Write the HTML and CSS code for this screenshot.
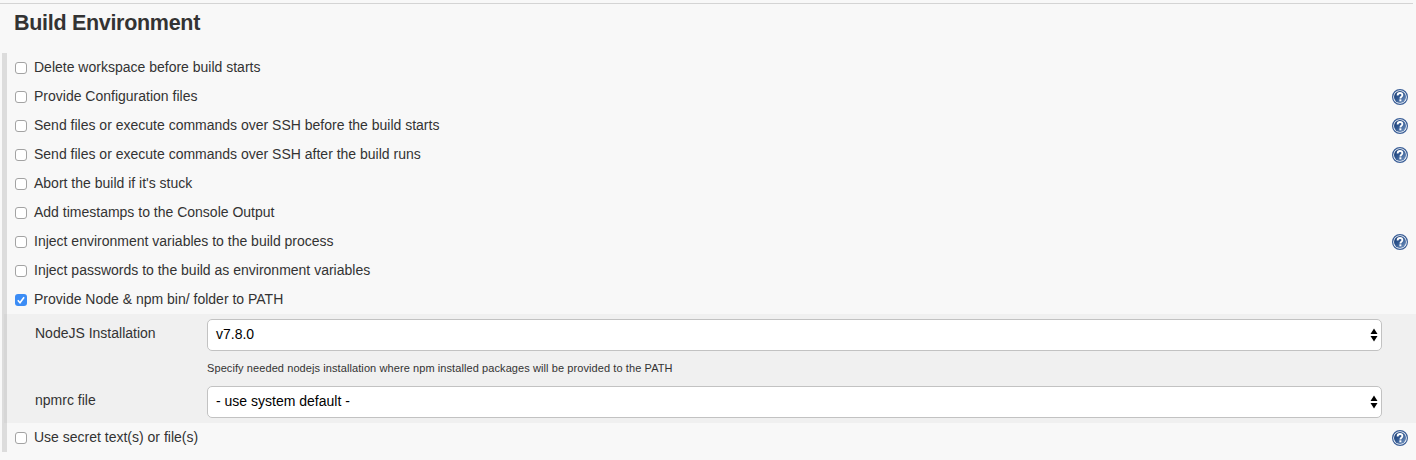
FILE: index.html
```html
<!DOCTYPE html>
<html lang="en">
<head>
<meta charset="utf-8">
<title>Build Environment</title>
<link rel="stylesheet" href="styles.css">
</head>
<body>
<svg class="defs" width="0" height="0" aria-hidden="true">
  <defs>
    <linearGradient id="blue" x1="0" y1="0" x2="1" y2="1">
      <stop offset="0" stop-color="#153870"/><stop offset=".45" stop-color="#305790"/><stop offset="1" stop-color="#7d9cc6"/>
    </linearGradient>
    <symbol id="help" viewBox="0 0 16 16">
      <circle cx="8" cy="8" r="7.4" fill="#fff" stroke="#3a5e97" stroke-width="1.2"/>
      <circle cx="8" cy="8" r="6" fill="url(#blue)"/>
      <path d="M5.6 6.4C5.6 4.6 6.7 4 8 4s2.4.7 2.4 2.1c0 1.7-2 1.6-2 3.3" fill="none" stroke="#fff" stroke-width="1.8"/>
      <path d="M7.4 10.3h2v2h-2z" fill="#fff"/>
    </symbol>
    <symbol id="arrows" viewBox="0 0 8 14">
      <path d="M4 .6 7.5 6h-7zM4 13.4.5 8h7z" fill="#000"/>
    </symbol>
  </defs>
</svg>
<section class="section">
  <h2 class="title"><span>Build Environment</span></h2>
  <div class="options">
    <label class="row"><span class="box"></span><span class="label">Delete workspace before build starts</span></label>
    <label class="row"><span class="box"></span><span class="label">Provide Configuration files</span><svg class="help"><use href="#help"/></svg></label>
    <label class="row"><span class="box"></span><span class="label">Send files or execute commands over SSH before the build starts</span><svg class="help"><use href="#help"/></svg></label>
    <label class="row"><span class="box"></span><span class="label">Send files or execute commands over SSH after the build runs</span><svg class="help"><use href="#help"/></svg></label>
    <label class="row"><span class="box"></span><span class="label">Abort the build if it's stuck</span></label>
    <label class="row"><span class="box"></span><span class="label">Add timestamps to the Console Output</span></label>
    <label class="row"><span class="box"></span><span class="label">Inject environment variables to the build process</span><svg class="help"><use href="#help"/></svg></label>
    <label class="row"><span class="box"></span><span class="label">Inject passwords to the build as environment variables</span></label>
    <label class="row"><span class="box checked"><svg class="tick" viewBox="0 0 12 12"><path d="M2.8 6.3 5 8.7 9.1 3.2" fill="none" stroke="#fff" stroke-width="1.6"/></svg></span><span class="label">Provide Node &amp; npm bin/ folder to PATH</span></label>
    <div class="panel">
      <div class="field">
        <span class="name">NodeJS Installation</span>
        <div class="select"><span>v7.8.0</span><svg class="arrows"><use href="#arrows"/></svg></div>
      </div>
      <p class="hint">Specify needed nodejs installation where npm installed packages will be provided to the PATH</p>
      <div class="field">
        <span class="name">npmrc file</span>
        <div class="select"><span>- use system default -</span><svg class="arrows"><use href="#arrows"/></svg></div>
      </div>
    </div>
    <label class="row"><span class="box"></span><span class="label">Use secret text(s) or file(s)</span><svg class="help"><use href="#help"/></svg></label>
  </div>
</section>
</body>
</html>
```
FILE: styles.css
```css
* { box-sizing: border-box; }
body {
  margin: 0;
  height: 460px;
  overflow: hidden;
  background: #f8f8f8;
  color: #333;
  font: 14px/17px "Liberation Sans", Arial, sans-serif;
}
.defs { display: block; }
.section { padding-top: 3px; }
.title {
  margin: 0 3px 0 0;
  height: 50px;
  padding: 7px 0 0 14px;
  border-top: 1px solid #d4d4d4;
  font-size: 21.5px;
  letter-spacing: -.3px;
  line-height: 24px;
}
.options {
  margin-left: 2px;
  border-left: 5px solid #dcdcdc;
}
.row {
  display: flex;
  align-items: center;
  height: 29px;
  padding: 0 8px;
}
.box {
  width: 12px;
  height: 12px;
  margin: 1px 7px 0 0;
  border: 1px solid #a3a3a3;
  border-radius: 3px;
  background: #fff;
}
.checked { border: 0; background: #3b8cf5; }
.tick { display: block; width: 12px; height: 12px; }
.help { width: 16px; height: 16px; margin: 1px 0 0 auto; }
.panel {
  height: 109px;
  margin-left: -3px;
  padding: 5px 34px 0 31px;
  background: linear-gradient(90deg, #d6d6d6 3px, #f0f0f0 3px);
}
.field { display: flex; height: 32px; }
.name { width: 172px; padding-top: 6px; }
.select {
  display: flex;
  flex: 1;
  align-items: center;
  justify-content: space-between;
  padding: 0 3px 0 8px;
  border: 1px solid #c2c2c2;
  border-radius: 5px;
  background: #fff;
  color: #000;
}
.select span { padding-bottom: 2px; }
.arrows { width: 8px; height: 14px; }
.hint {
  margin: 0 0 0 172px;
  height: 35px;
  padding-top: 10px;
  font-size: 11px;
  letter-spacing: .087px;
  line-height: 14px;
}
```
